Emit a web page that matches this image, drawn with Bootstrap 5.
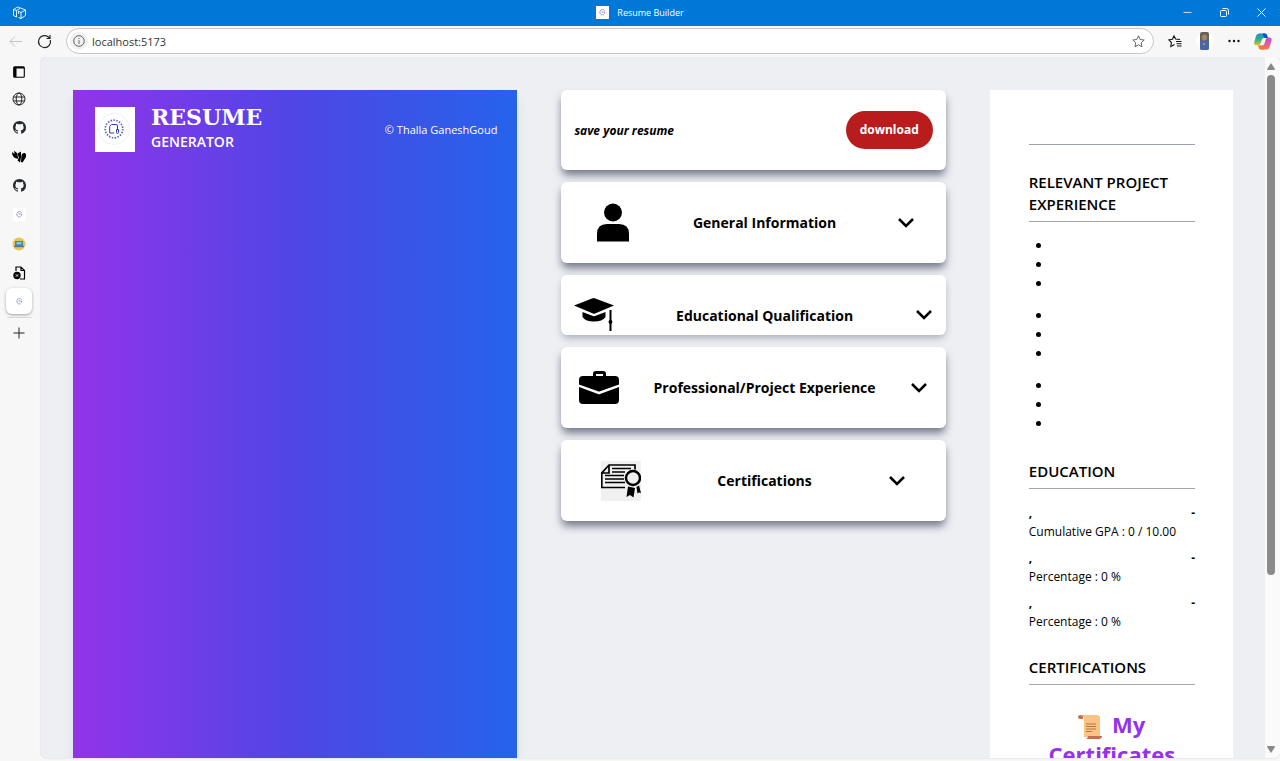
<!DOCTYPE html>
<html lang="en">
<head>
<meta charset="utf-8">
<meta name="viewport" content="width=device-width, initial-scale=1">
<title>Resume Builder</title>
<link href="https://cdn.jsdelivr.net/npm/bootstrap@5.3.0/dist/css/bootstrap.min.css" rel="stylesheet">
<style>
  body { font-family: "Open Sans", "Noto Sans", sans-serif; font-size: 12px; line-height: 19px; color: #000; background: #f7f7f7; }
  svg { display: block; flex: none; }
  .plain { border: 0; background: none; padding: 0; color: inherit; display: flex; align-items: center; justify-content: center; }
  .titlebar { height: 26px; background: #0078d7; color: #fff; font-size: 9px; display: grid; grid-template-columns: 1fr auto 1fr; }
  .window-buttons { padding-right: 12px; }
  .toolbar { height: 32px; padding: 0 8px; gap: 14px; }
  .address { height: 26px; border: 1px solid #c8c8c8; border-radius: 13px; background: #fff; padding: 0 8px 0 3px; }
  .address input { border: 0; outline: 0; background: none; font-size: 11px; padding: 0; color: #333; min-width: 0; }
  .info-dot { width: 18px; height: 18px; border-radius: 50%; background: #f1f1f1; }
  .rail { width: 41px; padding-top: 3px; padding-right: 3px; }
  .rail .plain { width: 26px; height: 29px; }
  .rail .tab-menu { height: 24px; }
  .rail .current { height: 26px; margin: 1px 0 3px; border-radius: 6px; background: #fff; box-shadow: 0 1px 3px rgba(0,0,0,.35); }
  .rail hr { width: 25px; margin: 0; border-color: #888; }
  .viewport { border-radius: 6px; overflow: hidden; background: #edeff3; margin-bottom: 3px; box-shadow: 0 0 2px rgba(0,0,0,.2); }
  .columns { display: grid; grid-template-columns: 444fr 384fr 243fr; gap: 44px; padding: 33px 32px 0; overflow: hidden; }
  .hero { background: linear-gradient(90deg, #9333ea, #4f46e5 50%, #2563eb); color: #fff; padding: 14px 20px 14px 22px; box-shadow: 0 8px 10px rgba(0,0,0,.08); }
  .brand { font-family: "DejaVu Serif", Georgia, serif; font-weight: 700; font-size: 22px; line-height: 26px; }
  .brand-sub { font-size: 14px; font-weight: 600; line-height: 24px; }
  .owner { font-size: 11px; }
  .panels { gap: 12px; }
  .panel { min-height: 81px; padding: 0 13px; background: #fff; border-radius: 6px; font-size: 14px; font-weight: 700; box-shadow: 0 6px 9px -1px rgba(30,38,62,.6); }
  .panel-save { min-height: 80px; }
  .panel-short { min-height: 60px; padding-top: 20px; box-shadow: 0 4px 9px -2px rgba(30,38,62,.4); }
  .panel-label { padding: 0 24px; font-size: 14px; }
  .save-note { font-size: 12px; font-style: italic; }
  .download { height: 38px; border-radius: 19px; padding: 0 13px; background: #b91c1c; color: #fff; font-size: 12px; font-weight: 700; }
  .download:hover { background: #991b1b; color: #fff; }
  .sheet { background: #fff; padding: 54px 38px 0 39px; }
  .sheet h2 { font-size: 15px; font-weight: 600; line-height: 22px; margin: 0; padding-bottom: 6px; border-bottom: 1px solid #a3a8ad; }
  .topline { border-top: 1px solid #9ca3af; padding-top: 26px; }
  .roles { padding: 14px 0 6px; }
  .schools { padding: 14px 0 10px; }
  .points { padding-left: 24px; margin: 0 0 13px; font-size: 14px; }
  .points li { height: 19px; }
  .grade { margin-bottom: 7px; }
  .my-certs { color: #9333ea; font-size: 22px; font-weight: 700; line-height: 28px; text-align: center; margin: 25px 0 0; }
  .scroller { width: 15px; background: #fafafa; padding: 6px 3px 5px 0; }
  .thumb { width: 8px; margin: 5px 0 auto; flex: 0 1 500px; border-radius: 4px; background: #8a8a8a; }
</style>
</head>
<body class="vh-100 overflow-hidden d-flex flex-column">
<svg width="0" height="0" class="position-absolute" aria-hidden="true">
  <defs>
    <symbol id="octo" viewBox="0 0 16 16"><path fill="#24292f" d="M8 0C3.580 0 0 3.580 0 8c0 3.540 2.290 6.530 5.470 7.590.4.070.55-.17.55-.38v-1.490c-2.010.37-2.530-.49-2.690-.94-.09-.23-.48-.94-.82-1.130-.28-.15-.68-.52-.01-.53.63-.01 1.080.58 1.230.82.72 1.210 1.870.87 2.330.66.07-.52.28-.87.51-1.070-1.780-.2-3.640-.89-3.640-3.950 0-.87.31-1.590.82-2.150-.08-.2-.36-1.020.08-2.120 0 0 .67-.21 2.200.82a7.600 7.600 0 0 1 4 0c1.530-1.040 2.200-.82 2.200-.82.44 1.100.16 1.920.08 2.120.51.56.82 1.270.82 2.150 0 3.070-1.870 3.750-3.650 3.950.29.25.54.73.54 1.480v2.190c0 .21.15.46.55.38A8 8 0 0 0 16 8c0-4.420-3.580-8-8-8"/></symbol>
    <symbol id="mini" viewBox="0 0 13 13"><path fill="#fff" d="M0 0h13v13H0z"/><path fill="none" stroke="#6a70d4" stroke-width=".8" d="M8.500 4.500A2.700 2.700 0 0 0 3.800 6.200 2.700 2.700 0 0 0 8 8.500M5.500 6h3v1.500" stroke-dasharray="2.200 .5"/></symbol>
    <symbol id="chev" viewBox="0 0 18 18"><path fill="none" stroke="#000" stroke-width="2.500" d="M2 5l7 7 7-7"/></symbol>
  </defs>
</svg>

<header class="titlebar align-items-center">
  <button class="plain ms-2 ps-1 justify-content-start" aria-label="Workspaces"><svg width="15" height="15" viewBox="0 0 15 15" fill="none" stroke="#fff" stroke-width=".9" stroke-linejoin="round"><path d="M4.500 12 1.500 10.500V4.500L5.500 2 8 3M4.500 12V5.500L8.500 3l5 2v5.500l-4.500 3L6.500 12.500M9 13.500V7.500l4.500-2.500M9 7.500 6.500 6.300v2.500M4.500 5.500l-3-1"/></svg></button>
  <div class="d-flex align-items-center gap-2"><svg width="13" height="13"><use href="#mini"/></svg><span>Resume Builder</span></div>
  <div class="window-buttons d-flex justify-content-end gap-4">
    <button class="plain" aria-label="Minimize"><svg width="13" height="13"><path d="M2.500 6.500h8" stroke="#fff" opacity=".7"/></svg></button>
    <button class="plain" aria-label="Restore"><svg width="13" height="13" fill="none" stroke="#fff"><rect x="2.500" y="4.500" width="6" height="6" rx="1"/><path d="M4.500 2.500h4q2 0 2 2v4"/></svg></button>
    <button class="plain" aria-label="Close"><svg width="13" height="13" stroke="#fff"><path d="m2.500 2.500 8 8m0-8-8 8"/></svg></button>
  </div>
</header>

<nav class="toolbar d-flex align-items-center">
  <button class="plain" aria-label="Back"><svg width="15" height="13" fill="none" stroke="#c4c4c4"><path d="M14 6.500H2M7 1.500l-5 5 5 5"/></svg></button>
  <button class="plain" aria-label="Reload"><svg width="15" height="15" fill="none" stroke="#222" stroke-width="1.200"><path d="M13.300 6A6 6 0 1 1 11 2.700l1.800 1.600M13 1v3.500H9.500"/></svg></button>
  <div class="address d-flex align-items-center flex-grow-1">
    <span class="plain info-dot"><svg width="12" height="12" fill="none" stroke="#666"><circle cx="6" cy="6" r="5.300"/><path d="M6 5.200V9M6 3v1"/></svg></span>
    <input class="flex-grow-1 ps-1" type="text" value="localhost:5173" aria-label="Address">
    <button class="plain" aria-label="Add to favorites"><svg width="13" height="13" viewBox="0 0 13 13" fill="none" stroke="#666"><path d="m6.500 .8 1.700 3.700 4 .5-3 2.800.8 4-3.500-2L3 11.800l.8-4-3-2.800 4-.5z"/></svg></button>
  </div>
  <button class="plain" aria-label="Favorites"><svg width="14" height="13" viewBox="0 0 14 13" fill="none" stroke="#111" stroke-width="1.100"><path d="M12 4.500 7.600 4 6 .9 4.400 4.200.8 4.800l2.600 2.700L2.800 11.500 6.500 9.500M8 6.500h5.500M8.500 8.700h5M9 11h4.500"/></svg></button>
  <button class="plain" aria-label="Profile"><svg width="18" height="18"><circle cx="9" cy="9" r="9" fill="#fff"/><rect x="4" width="9" height="18" rx="2" fill="#6a6257"/><path fill="#4766a4" d="M4 9q4.500-2 9 0v7q0 2-2 2H6q-2 0-2-2z"/><ellipse cx="8.500" cy="5.500" rx="2.500" ry="3" fill="#a5866d"/><path fill="#b98c70" d="M7 11h2v2H7z"/></svg></button>
  <button class="plain" aria-label="Settings and more"><svg width="12" height="12"><g fill="#111"><circle cx="1.500" cy="6" r="1.200"/><circle cx="6" cy="6" r="1.200"/><circle cx="10.500" cy="6" r="1.200"/></g></svg></button>
  <button class="plain" aria-label="Copilot"><svg width="18" height="17" viewBox="0 0 18 17"><defs><linearGradient id="ca" x2="0" y2="1"><stop stop-color="#2489dc"/><stop offset=".55" stop-color="#35b77b"/><stop offset="1" stop-color="#f0c426"/></linearGradient><linearGradient id="cb" x2="0" y2="1"><stop stop-color="#a658e0"/><stop offset=".5" stop-color="#e7589c"/><stop offset="1" stop-color="#f6803c"/></linearGradient></defs><path fill="url(#ca)" d="M5 .5h6q2 0 1.500 2.500L12 5h-2Q8.300 5 7.700 7L6.500 10.500Q6 12.500 4 12.500H2.500Q-.5 12.500.3 9L2 3Q2.700.5 5 .5"/><path fill="#174fc0" d="M8.500.5H11q1.800 0 2.300 2L14 5h-3Q10 5 9.500 3z"/><path fill="url(#cb)" d="M13 16.500H7q-2 0-1.800-2l.6-2H8q2 0 2.500-2L11.500 7q.5-2.500 2.500-2.500h1.500q2.800 0 2 3.500l-2 6q-.8 2.500-2.500 2.500"/><path fill="#f27a37" d="M4 12.500h4.500L9 14.500q.5 2 2 2H7q-1.800 0-2.300-1.800z"/></svg></button>
</nav>

<div class="d-flex flex-grow-1 overflow-hidden">
  <aside class="rail d-flex flex-column align-items-center flex-shrink-0">
    <button class="plain tab-menu" aria-label="Tab actions"><svg width="12" height="12"><rect x=".7" y=".7" width="10.600" height="10.600" rx="1" fill="none" stroke="#000" stroke-width="1.100"/><path d="M1 1h2.500v10H1zM1 1h10v1.500H1z"/></svg></button>
    <button class="plain" aria-label="Web tab"><svg width="14" height="14" fill="none" stroke="#222"><circle cx="7" cy="7" r="6"/><ellipse cx="7" cy="7" rx="2.800" ry="6"/><path d="M1.500 5h11M1.500 9h11"/></svg></button>
    <button class="plain" aria-label="Repository tab"><svg width="13" height="13"><use href="#octo"/></svg></button>
    <button class="plain" aria-label="Design tab"><svg width="14" height="13" viewBox="0 0 14 13"><path d="M0 2 2.500 4 2 .8 5 3 6.500 9 3 8Q0 6 0 2M5.500 3.500 9 1.500v6L8 12.500 5.500 10.500 7 8zM9.500 5q1-2.500 3.500-2 1.500 1 1 4L10.500 12.500 9 12z"/></svg></button>
    <button class="plain" aria-label="Repository tab 2"><svg width="13" height="13"><use href="#octo"/></svg></button>
    <button class="plain" aria-label="Resume tab"><svg width="13" height="13"><use href="#mini"/></svg></button>
    <button class="plain" aria-label="Laptop tab"><svg width="14" height="14"><circle cx="7" cy="7" r="6.500" fill="#efc054"/><path fill="#3c83a8" d="M3 4h8v5H3z"/><path fill="#8cc7df" d="M4.500 5h5v2.500h-5z"/><path fill="#527d8c" d="M2 9h10v1.200H2z"/></svg></button>
    <button class="plain" aria-label="File tab"><svg width="13" height="14" fill="none" stroke="#000" stroke-width="1.200"><path d="M3 5V1h5l3.500 3.500V13H7M8 1v3.500h3.500"/><circle cx="4" cy="9.500" r="3.700" fill="#000" stroke="none"/><path stroke="#fff" stroke-width=".8" d="m2.700 8.200 2.600 2.600m0-2.600-2.600 2.600"/></svg></button>
    <button class="plain current" aria-label="Resume Builder tab"><svg width="13" height="13"><use href="#mini"/></svg></button>
    <hr>
    <button class="plain" aria-label="New tab"><svg width="12" height="12" stroke="#222"><path d="M6 .5v11M.5 6h11"/></svg></button>
  </aside>

  <div class="viewport d-flex flex-grow-1">
    <main class="columns flex-grow-1">
      <section class="hero">
        <div class="d-flex align-items-center">
          <svg width="40" height="45" viewBox="0 0 40 45" role="img" aria-label="Logo"><path fill="#fff" d="M0 0h40v45H0z"/><circle cx="19" cy="22" r="15.500" fill="none" stroke="#e6e8fb" stroke-width=".7"/><circle cx="19" cy="22" r="8.800" fill="none" stroke="#5b64c4" stroke-width="1.700" stroke-dasharray="1.500 1.400"/><path fill="none" stroke="#2b3fb5" stroke-width="1" d="M19 26h-4.300v-6.500l1.800-2H21q1.500 0 1.500 1.500v4M21.500 23v2.500q0 1 1 1t1-1V23q0-1-1-1t-1 1"/></svg>
          <div class="ms-3"><div class="brand">RESUME</div><div class="brand-sub">GENERATOR</div></div>
          <span class="owner ms-auto">© Thalla GaneshGoud</span>
        </div>
      </section>

      <section class="panels d-flex flex-column">
        <div class="panel panel-save d-flex align-items-center justify-content-between">
          <span class="save-note">save your resume</span>
          <button class="btn download">download</button>
        </div>
        <button class="plain panel justify-content-around">
          <svg width="40" height="40"><circle cx="20" cy="9.500" r="9"/><path d="M4 38.500V31q0-10 10-10h12q10 0 10 10v7.500z"/></svg>
          <span class="panel-label">General Information</span><svg width="18" height="18"><use href="#chev"/></svg>
        </button>
        <button class="plain panel panel-short justify-content-between">
          <svg width="40" height="40" viewBox="0 0 40 40"><path d="M20 3 40 10.500 21 18.500q-1 .5-2 0L0 10.500 18 3.500q1-.5 2-.5M8.500 17l10.500 4q1 .4 2 0l10.500-4v5q-3 4.500-11.500 4.500T8.500 22zM35.500 15h2v10q1.500 1.200.6 3l-.6 1v7h-2v-7l-.7-1q-.8-1.800.7-3z"/></svg>
          <span class="panel-label">Educational Qualification</span><svg width="18" height="18"><use href="#chev"/></svg>
        </button>
        <button class="plain panel justify-content-around">
          <svg width="40" height="40" viewBox="0 0 40 40"><path fill-rule="evenodd" d="M14 8V6q0-3 3-3h7q3 0 3 3v2h9q4 0 4 4v4.500L21 23.300q-1 .4-2 0L0 16.500V12q0-4 4-4zm3 0h7V6h-7zM0 19l19 7q1 .4 2 0l19-7v13q0 4-4 4H4q-4 0-4-4z"/></svg>
          <span class="panel-label">Professional/Project Experience</span><svg width="18" height="18"><use href="#chev"/></svg>
        </button>
        <button class="plain panel justify-content-around">
          <svg width="40" height="40" viewBox="0 0 40 40"><path fill="#f0f0f0" d="M0 0h40v40H0z"/><g fill="none" stroke="#000" stroke-width="1.700"><path d="M24 26.500H.8V12L8 4h26v4.500M1 12h7V4M11 7.500h19M11 11h13M4 14.500h19M4 18h19M4 21.500h20"/><circle cx="32" cy="17" r="7" stroke-width="2.400"/></g><path d="m27 25.500 7 1.500-1.500 9.500-3.500-2.500-3.500 2zM35.500 26l2.500-1.500L40 32l-2-.5-1.500 1z"/></svg>
          <span class="panel-label">Certifications</span><svg width="18" height="18"><use href="#chev"/></svg>
        </button>
      </section>

      <article class="sheet">
        <div class="topline"></div>
        <h2>RELEVANT PROJECT EXPERIENCE</h2>
        <div class="roles">
          <ul class="points"><li></li><li></li><li></li></ul>
          <ul class="points"><li></li><li></li><li></li></ul>
          <ul class="points"><li></li><li></li><li></li></ul>
        </div>
        <h2 class="pt-2">EDUCATION</h2>
        <div class="schools">
          <div class="grade"><div class="d-flex justify-content-between fw-bold"><span>,</span><span>-</span></div>Cumulative GPA : 0 / 10.00</div>
          <div class="grade"><div class="d-flex justify-content-between fw-bold"><span>,</span><span>-</span></div>Percentage : 0 %</div>
          <div class="grade"><div class="d-flex justify-content-between fw-bold"><span>,</span><span>-</span></div>Percentage : 0 %</div>
        </div>
        <h2 class="pt-2">CERTIFICATIONS</h2>
        <h3 class="my-certs"><svg class="d-inline-block me-1" width="24" height="26" viewBox="0 0 24 26" aria-hidden="true"><path fill="#f9c384" d="M2 1h18q2 1 2 3v19H6V5Q6 2 2 1"/><path fill="#c86e4d" d="M2 1q-2 0-2 2t2 2h3V3Q5 1 2 1M10 22h14q0 3-3 3H8q2-1 2-3"/><path stroke="#b97845" d="M8 10h10M8 12.500h10M8 15h10M8 17.500h6"/></svg> My Certificates</h3>
      </article>
    </main>
    <div class="scroller d-flex flex-column align-items-center flex-shrink-0" aria-hidden="true">
      <svg width="8" height="7"><path fill="#8a8a8a" d="M4 0l4 6q0 1-1 1H1Q0 7 0 6z"/></svg>
      <div class="thumb"></div>
      <svg width="8" height="7"><path fill="#8a8a8a" d="M4 7 0 1q0-1 1-1h6q1 0 1 1z"/></svg>
    </div>
  </div>
</div>
<script src="https://cdn.jsdelivr.net/npm/bootstrap@5.3.0/dist/js/bootstrap.bundle.min.js"></script>
</body>
</html>
